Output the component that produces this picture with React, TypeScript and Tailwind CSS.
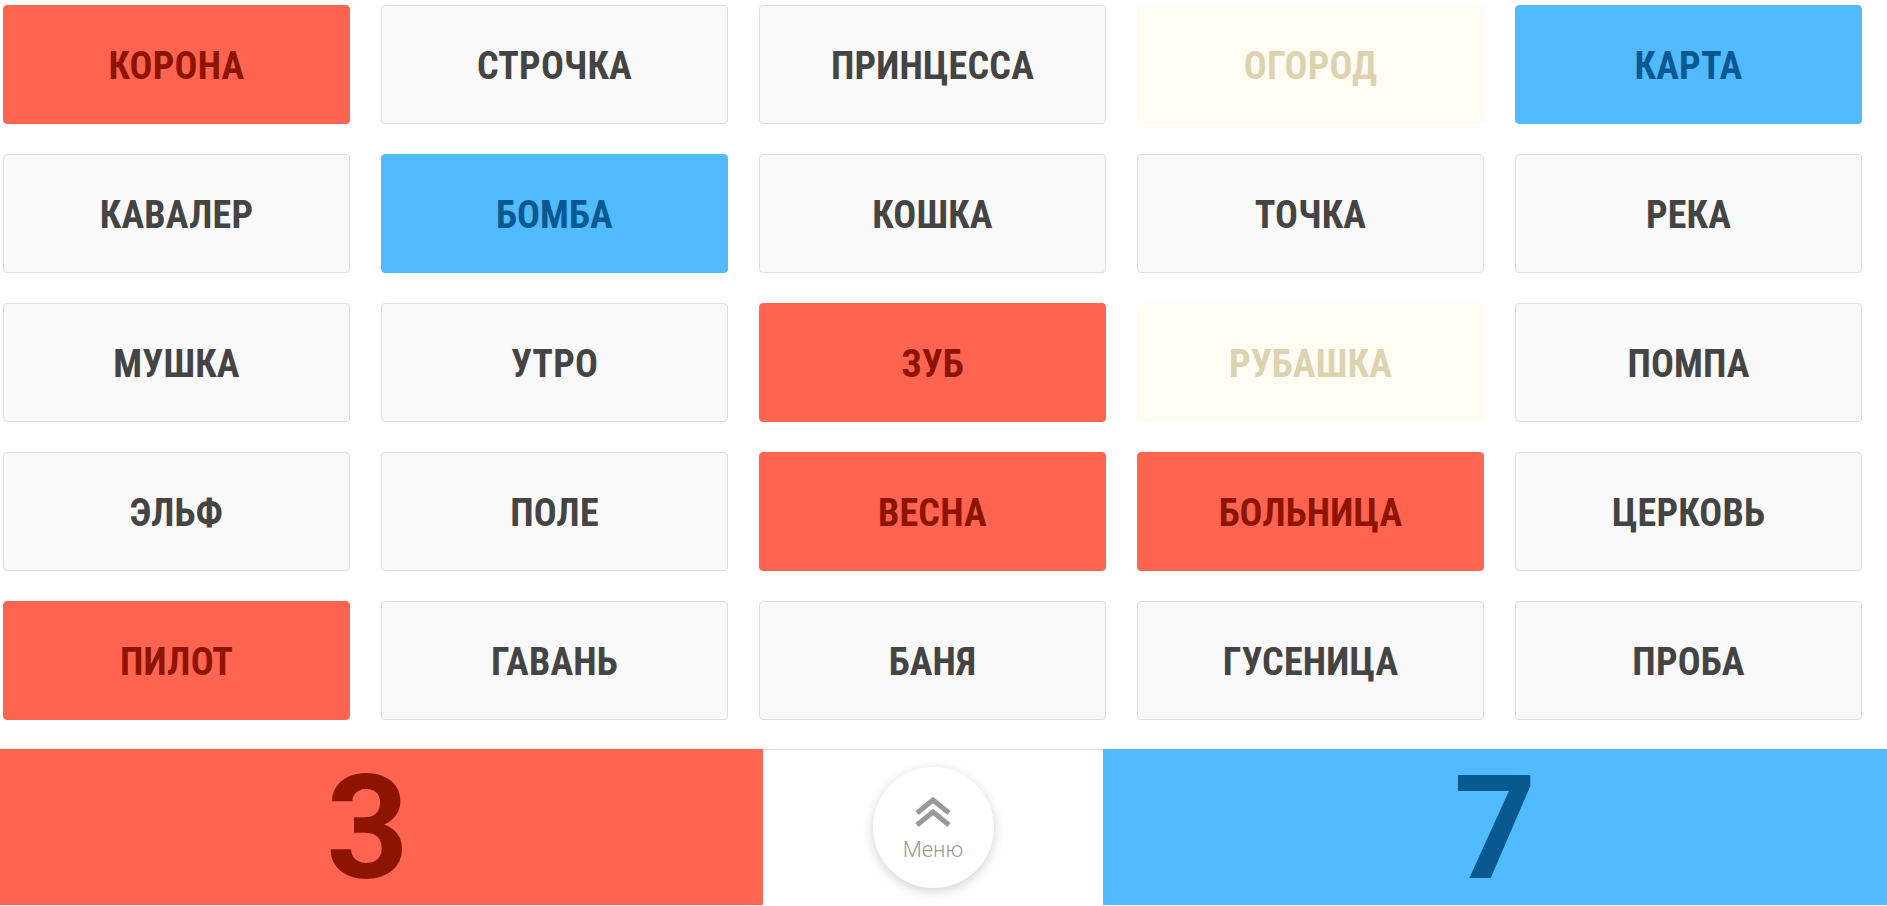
import * as React from "react";

type Team = "red" | "blue" | "neutral" | "beige";

const words: [string, Team][] = [
  ["КОРОНА", "red"],
  ["СТРОЧКА", "neutral"],
  ["ПРИНЦЕССА", "neutral"],
  ["ОГОРОД", "beige"],
  ["КАРТА", "blue"],
  ["КАВАЛЕР", "neutral"],
  ["БОМБА", "blue"],
  ["КОШКА", "neutral"],
  ["ТОЧКА", "neutral"],
  ["РЕКА", "neutral"],
  ["МУШКА", "neutral"],
  ["УТРО", "neutral"],
  ["ЗУБ", "red"],
  ["РУБАШКА", "beige"],
  ["ПОМПА", "neutral"],
  ["ЭЛЬФ", "neutral"],
  ["ПОЛЕ", "neutral"],
  ["ВЕСНА", "red"],
  ["БОЛЬНИЦА", "red"],
  ["ЦЕРКОВЬ", "neutral"],
  ["ПИЛОТ", "red"],
  ["ГАВАНЬ", "neutral"],
  ["БАНЯ", "neutral"],
  ["ГУСЕНИЦА", "neutral"],
  ["ПРОБА", "neutral"],
];

const cardStyles: Record<Team, string> = {
  red: "bg-[#ff6450] border-[#ff6450] text-[#8c1400]",
  blue: "bg-[#52baff] border-[#52baff] text-[#07598f]",
  neutral: "bg-[#f9f9f9] border-[#dedede] text-[#444444]",
  beige: "bg-[#fffcf3] border-[#fffcf3] text-[#ddd3b1]",
};

function WordCard({ word, team }: { word: string; team: Team }) {
  return (
    <div
      className={`flex h-[119px] items-center justify-center rounded-[4px] border ${cardStyles[team]}`}
    >
      <span className="pt-[2px] font-['Roboto_Condensed','Roboto',sans-serif] text-[38px] font-bold leading-none tracking-[0.2px]">
        {word}
      </span>
    </div>
  );
}

function ChevronsUp() {
  return (
    <svg width="36" height="30" viewBox="0 0 36 30" fill="none" stroke="#999999" strokeWidth="5">
      <polyline points="2,16 18,3 34,16" />
      <polyline points="2,28 18,15 34,28" />
    </svg>
  );
}

export default function App() {
  return (
    <div className="min-h-[906px] bg-white font-['Roboto',sans-serif]">
      <div className="pl-[3px] pt-[5px]">
        <div className="grid grid-cols-[repeat(5,347px)] gap-x-[31px] gap-y-[30px]">
          {words.map(([word, team]) => (
            <WordCard key={word} word={word} team={team} />
          ))}
        </div>
      </div>

      {/* Счёт и кнопка меню */}
      <div className="mt-[29px] flex h-[156px]">
        <div className="flex w-[763px] items-center justify-center bg-[#ff6450] pr-[28px] pt-[4px]">
          <span className="text-[144px] font-bold leading-none text-[#8c1400]">3</span>
        </div>
        <div className="flex flex-1 items-center justify-center border-t border-[#dddddd] bg-white">
          <button className="flex h-[121px] w-[121px] flex-col items-center justify-center gap-[12px] rounded-full bg-white pt-[2px] shadow-[0_3px_12px_rgba(0,0,0,0.18)]">
            <ChevronsUp />
            <span className="text-[22px] font-light leading-none text-[#999999]">Меню</span>
          </button>
        </div>
        <div className="flex w-[784px] items-center justify-center bg-[#52baff] pt-[4px]">
          <span className="text-[144px] font-bold leading-none text-[#07598f]">7</span>
        </div>
      </div>
    </div>
  );
}
